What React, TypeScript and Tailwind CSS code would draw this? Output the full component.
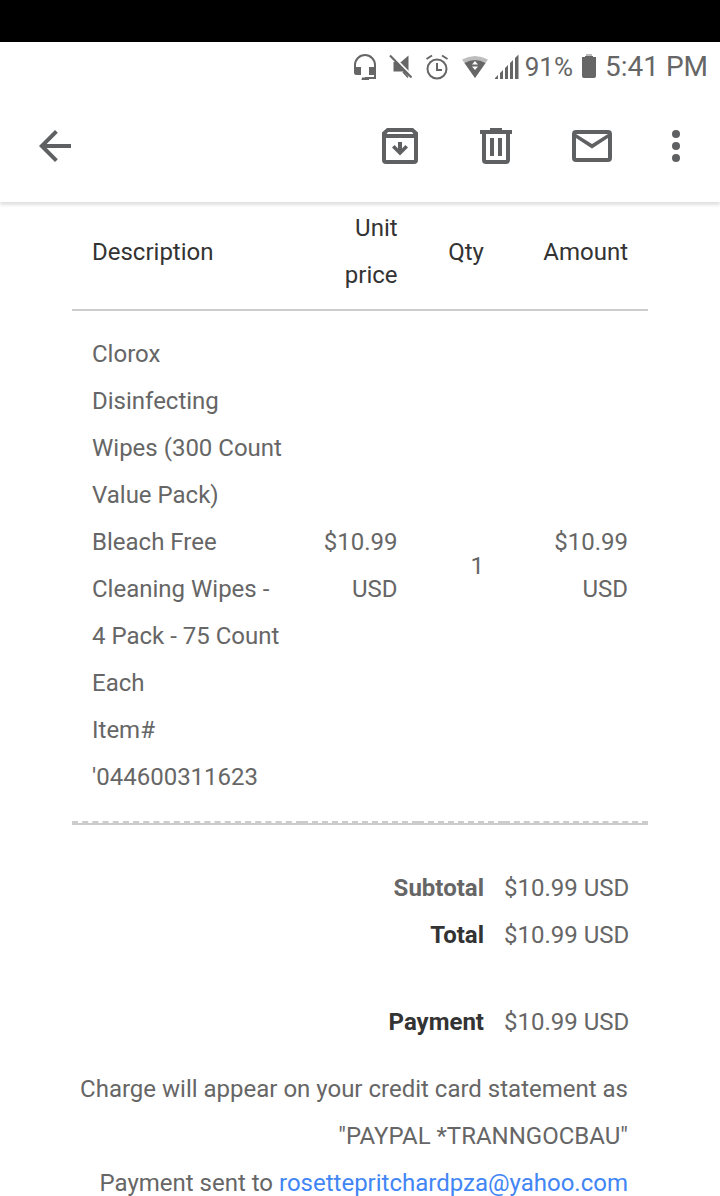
import type { ReactNode } from "react";

function ToolbarButton({ label, children }: { label: string; children: ReactNode }) {
  return (
    <button type="button" aria-label={label} className="size-12 shrink-0 cursor-pointer">
      <svg viewBox="0 0 24 24" className="size-12" fill="currentColor" aria-hidden="true">
        {children}
      </svg>
    </button>
  );
}

function StatusBar() {
  return (
    <div className="flex h-[50px] items-center justify-end pr-3 text-[#666]">
      <svg viewBox="0 0 24 26" className="mr-3 h-[26px] w-6" aria-hidden="true">
        <path d="M2 15V11a10 10 0 0 1 20 0V24H12" fill="none" stroke="currentColor" strokeWidth="2" />
        <path d="M1 13h7v8H3.500a2.500 2.500 0 0 1-2.500-2.500zM16 13h7v8h-7zM9 23.500h7v2.500H8.500z" fill="currentColor" />
      </svg>
      <svg viewBox="0 0 24 26" className="mr-3 h-[26px] w-6" aria-hidden="true">
        <path d="M4.500 8H12L19.500 1.500V22.500L14 17.500H4.500z" fill="currentColor" />
        <path d="M2 0.500L24.500 23.500" stroke="#fff" strokeWidth="2.500" />
        <path d="M1 1.500L22.500 23.500" stroke="currentColor" strokeWidth="2" />
        <path d="M14 18l5 5.500" stroke="currentColor" strokeWidth="1.500" />
      </svg>
      <svg viewBox="0 0 24 26" className="mr-3 h-[26px] w-6" fill="none" stroke="currentColor" aria-hidden="true">
        <circle cx="12" cy="15" r="9.500" strokeWidth="2" />
        <path d="M12 9v7h5" strokeWidth="2" />
        <path d="M1.500 5L7 1.500M17 1.500L22.500 5" strokeWidth="2" />
      </svg>
      <svg viewBox="0 0 28 26" className="mr-1.5 h-[26px] w-7" aria-hidden="true">
        <path d="M1 5.500Q14-1.500 27 5.500L14 24z" fill="#bdbdbd" />
        <path d="M3.500 9Q14 3 24.500 9L14 24z" fill="currentColor" />
        <path d="M14 7l3 3.500h-6zM14 16l-3-3.500h6z" fill="#fff" />
      </svg>
      <svg viewBox="0 0 24 26" className="mr-1.5 h-[26px] w-6" fill="currentColor" aria-hidden="true">
        <path d="M0 25v-1l3-3v4zM5 25v-6l3-3v9zM10 25V14l3-3v14zM15 25V9l3-3v19zM20 25V4l3.500-3.500V25z" />
      </svg>
      <span className="mr-2 text-[26px] leading-none">91%</span>
      <svg viewBox="0 0 16 26" className="mr-2 h-[26px] w-4" aria-hidden="true">
        <path d="M5 0h6v2H5z" fill="#bdbdbd" />
        <path d="M4 2h8v1h3v19a2 2 0 0 1-2 2H3a2 2 0 0 1-2-2V3h3z" fill="currentColor" />
      </svg>
      <span className="text-[28px] leading-none">5:41 PM</span>
    </div>
  );
}

function Toolbar() {
  return (
    <header className="relative flex h-[110px] shrink-0 items-center bg-white pr-5 pb-0.5 pl-[31px] text-[#5f6062] shadow-[0_3px_3px_rgba(0,0,0,0.12)]">
      <div className="flex flex-1">
        <ToolbarButton label="Back">
          <path d="M20 11H7.830l5.590-5.590L12 4l-8 8 8 8 1.410-1.410L7.830 13H20v-2z" />
        </ToolbarButton>
      </div>
      <div className="flex items-center gap-12">
        <ToolbarButton label="Archive">
          <path
            fillRule="evenodd"
            d="M5.500 3h13L21 5.200V19a2 2 0 0 1-2 2H5a2 2 0 0 1-2-2V5.200zM6 5l-.7 1h13.400L18 5zM5 8v11h14V8z"
          />
          <path d="M11 10h2v3.200l1.700-1.700 1.300 1.300-4 4-4-4 1.300-1.300 1.700 1.700z" />
        </ToolbarButton>
        <ToolbarButton label="Delete">
          <path
            fillRule="evenodd"
            d="M9 3h6v1h5v2h-1v13a2 2 0 0 1-2 2H7a2 2 0 0 1-2-2V6H4V4h5zM7 6v13h10V6z"
          />
          <path d="M9 8h2v9H9zM13 8h2v9h-2z" />
        </ToolbarButton>
        <ToolbarButton label="Mark as unread">
          <path
            fillRule="evenodd"
            d="M4 4h16a2 2 0 0 1 2 2v12a2 2 0 0 1-2 2H4a2 2 0 0 1-2-2V6a2 2 0 0 1 2-2zM4 8v10h16V8l-8 5.200zM4 6l8 5 8-5z"
          />
        </ToolbarButton>
      </div>
      <div className="ml-9 flex">
        <ToolbarButton label="More options">
          <circle cx="12" cy="6" r="2" />
          <circle cx="12" cy="12" r="2" />
          <circle cx="12" cy="18" r="2" />
        </ToolbarButton>
      </div>
    </header>
  );
}

const totals = [
  { label: "Subtotal", value: "$10.99 USD", labelClass: "text-[#666]", rowClass: "" },
  { label: "Total", value: "$10.99 USD", labelClass: "text-[#333]", rowClass: "" },
  { label: "Payment", value: "$10.99 USD", labelClass: "text-[#333]", rowClass: "pt-10" },
];

function Receipt() {
  return (
    <main className="min-h-0 flex-1 overflow-hidden px-[72px] pt-[3px] text-2xl leading-[47px] text-[#666]">
      <div className="border-b-2 border-[#ccc]">
        <table className="w-full table-fixed border-separate border-spacing-0">
          <thead className="text-[#333]">
            <tr>
              <th className="w-[40%] border-b-2 border-[#ccc] px-5 pb-2.5 text-left font-normal">Description</th>
              <th className="w-[20%] border-b-2 border-[#ccc] px-5 pb-2.5 text-right font-normal">Unit price</th>
              <th className="w-[15%] border-b-2 border-[#ccc] px-5 pb-2.5 text-right font-normal">Qty</th>
              <th className="w-[25%] border-b-2 border-[#ccc] px-5 pb-2.5 text-right font-normal">Amount</th>
            </tr>
          </thead>
          <tbody>
            <tr>
              <td className="border-b-2 border-dashed border-[#ccc] p-5">
                Clorox Disinfecting Wipes (300 Count Value Pack)
                <br />
                Bleach Free Cleaning Wipes - 4 Pack - 75 Count Each
                <br />
                Item# '044600311623
              </td>
              <td className="border-b-2 border-dashed border-[#ccc] p-5 text-right">$10.99 USD</td>
              <td className="border-b-2 border-dashed border-[#ccc] p-5 text-right">1</td>
              <td className="border-b-2 border-dashed border-[#ccc] p-5 text-right">$10.99 USD</td>
            </tr>
          </tbody>
        </table>
      </div>

      <table className="mt-10 w-full table-fixed border-separate border-spacing-0 text-right">
        <tbody>
          {totals.map((row) => (
            <tr key={row.label}>
              <th scope="row" className={`w-[75%] pr-5 font-bold ${row.labelClass} ${row.rowClass}`}>
                {row.label}
              </th>
              <td className={`pr-5 whitespace-nowrap ${row.rowClass}`}>{row.value}</td>
            </tr>
          ))}
        </tbody>
      </table>

      <div className="mt-5 pr-5 text-right">
        <p>
          Charge will appear on your credit card statement as
          <br />
          "PAYPAL *TRANNGOCBAU"
        </p>
        <p>
          Payment sent to{" "}
          <a href="mailto:rosettepritchardpza@yahoo.com" className="text-[#4285f4]">
            rosettepritchardpza@yahoo.com
          </a>
        </p>
      </div>
    </main>
  );
}

export default function App() {
  return (
    <div className="flex h-screen flex-col overflow-hidden bg-white font-['Roboto',sans-serif]">
      <div className="h-[42px] shrink-0 bg-black" />
      <StatusBar />
      <Toolbar />
      <Receipt />
    </div>
  );
}
